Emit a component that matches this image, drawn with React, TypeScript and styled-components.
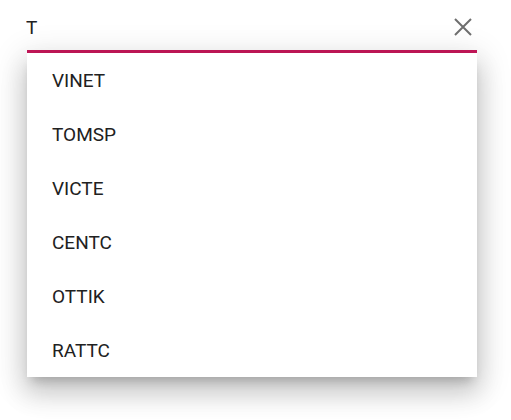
import styled, { createGlobalStyle } from "styled-components";

const GlobalStyle = createGlobalStyle`
  body {
    margin: 0;
    min-height: 420px;
    background: #ffffff;
    font-family: Roboto, "Noto Sans", Arial, sans-serif;
  }
`

const Page = styled.div`
  padding: 0 0 60px 27px;
  width: 450px;
`

const InputRow = styled.div`
  display: flex;
  align-items: center;
  box-sizing: border-box;
  height: 53px;
  padding-top: 4px;
  border-bottom: 3px solid #c9185b;
`

const SearchInput = styled.input`
  flex: 1;
  border: none;
  outline: none;
  background: transparent;
  font-family: Roboto, Arial, sans-serif;
  font-size: 19px;
  color: #212121;
  padding: 0;
  margin-left: -1px;
`

const ClearButton = styled.button`
  display: flex;
  align-items: center;
  justify-content: center;
  width: 24px;
  height: 24px;
  border: none;
  background: none;
  padding: 0;
  margin-right: 2px;
  cursor: pointer;
`

const Popup = styled.ul`
  list-style: none;
  margin: 0;
  padding: 0;
  background: #ffffff;
  box-shadow: 0 8px 10px -5px rgba(0, 0, 0, 0.2), 0 16px 24px 2px rgba(0, 0, 0, 0.14),
    0 6px 30px 5px rgba(0, 0, 0, 0.12);
`

const Item = styled.li`
  box-sizing: border-box;
  height: 54px;
  padding: 2px 0 0 25px;
  line-height: 52px;
  font-size: 19px;
  color: #212121;
`

const customers = ["VINET", "TOMSP", "VICTE", "CENTC", "OTTIK", "RATTC"]

export default function App() {
  return (
    <>
      <GlobalStyle />
      <Page>
        <InputRow>
          <SearchInput defaultValue="T" />
          <ClearButton aria-label="clear">
            <svg width="18" height="18" viewBox="0 0 18 18">
              <path d="M1 1 L17 17 M17 1 L1 17" stroke="#6e6e6e" strokeWidth="2" />
            </svg>
          </ClearButton>
        </InputRow>
        <Popup>
          {customers.map(c => (
            <Item key={c}>{c}</Item>
          ))}
        </Popup>
      </Page>
    </>
  )
}
